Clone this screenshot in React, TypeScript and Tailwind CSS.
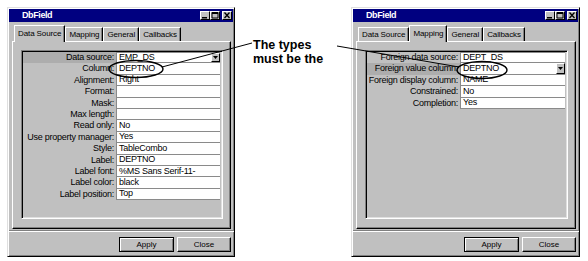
const ui = "font-['Liberation_Sans',Arial,sans-serif]";

type Row = { label: string; value: string; combo?: boolean; hot?: boolean };

const leftRows: Row[] = [
  { label: "Data source:", value: "EMP_DS", combo: true, hot: true },
  { label: "Column:", value: "DEPTNO" },
  { label: "Alignment:", value: "Right" },
  { label: "Format:", value: "" },
  { label: "Mask:", value: "" },
  { label: "Max length:", value: "" },
  { label: "Read only:", value: "No" },
  { label: "Use property manager:", value: "Yes" },
  { label: "Style:", value: "TableCombo" },
  { label: "Label:", value: "DEPTNO" },
  { label: "Label font:", value: "%MS Sans Serif-11-" },
  { label: "Label color:", value: "black" },
  { label: "Label position:", value: "Top" },
];

const rightRows: Row[] = [
  { label: "Foreign data source:", value: "DEPT_DS" },
  { label: "Foreign value column:", value: "DEPTNO", combo: true, hot: true },
  { label: "Foreign display column:", value: "NAME" },
  { label: "Constrained:", value: "No" },
  { label: "Completion:", value: "Yes" },
];

const tabNames = ["Data Source", "Mapping", "General", "Callbacks"];

function TitleButton({ kind }: { kind: "min" | "max" | "close" }) {
  return (
    <div className="w-[10px] h-[9px] bg-[#c0c0c0] border-t border-l border-white border-r border-b border-r-black border-b-black flex items-center justify-center">
      <svg width="8" height="7" viewBox="0 0 8 7">
        {kind === "min" && <rect x="1" y="5" width="5" height="1.5" fill="#000" />}
        {kind === "max" && (
          <path d="M1 0.5h6v5.5h-6z M1 1.5h6" fill="none" stroke="#000" strokeWidth="1" />
        )}
        {kind === "close" && <path d="M1.5 0.5l5 5.5M6.5 0.5l-5 5.5" stroke="#000" strokeWidth="1.3" />}
      </svg>
    </div>
  );
}

function PropRow({ row, first }: { row: Row; first: boolean }) {
  return (
    <div className="flex h-[11.4px] leading-[11px]">
      <div
        className={
          "w-[93px] shrink-0 text-right pr-[2px] whitespace-nowrap text-[#000] " +
          (row.hot ? "bg-[#adadad]" : "")
        }
      >
        {row.label}
      </div>
      <div
        className={
          "flex-1 mr-[1px] bg-white border-l border-b border-[#8a8a8a] flex items-center pl-[2px] whitespace-nowrap " +
          (first ? "border-t" : "")
        }
      >
        <span className="flex-1">{row.value}</span>
        {row.combo && (
          <div className="w-[9px] h-full bg-[#c0c0c0] border-t border-l border-white border-r border-b border-r-black border-b-black flex items-center justify-center">
            <svg width="5" height="3" viewBox="0 0 5 3">
              <path d="M0 0h5L2.5 3z" fill="#000" />
            </svg>
          </div>
        )}
      </div>
    </div>
  );
}

function Dialog({ active, rows, width }: { active: number; rows: Row[]; width: string }) {
  return (
    <div
      className={
        width +
        " h-[250px] shrink-0 bg-[#c0c0c0] border border-t-[#dfdfdf] border-l-[#dfdfdf] border-r-black border-b-black shadow-[inset_1px_1px_0_#fff,inset_-1px_-1px_0_#808080] p-[1px] flex flex-col " +
        ui
      }
    >
      <div className="h-[13px] bg-[#000080] flex items-center pl-[13px] pr-[1px]">
        <span className="flex-1 text-white font-bold text-[9px] tracking-[-0.4px] leading-none">DbField</span>
        <TitleButton kind="min" />
        <TitleButton kind="max" />
        <div className="w-[2px]" />
        <TitleButton kind="close" />
      </div>

      <div className="flex-1 flex flex-col pl-[3px] pr-[2px]">
        <div className="h-[19px] flex items-end pl-[2px] text-[8px] tracking-[-0.1px]">
          {tabNames.map((t, i) =>
            i === active ? (
              <div
                key={t}
                className="relative z-10 -mb-px h-[17px] px-[3px] bg-[#c0c0c0] border-t border-l border-white border-r border-r-black shadow-[inset_-1px_0_0_#808080] flex items-center"
              >
                {t}
              </div>
            ) : (
              <div
                key={t}
                className="h-[14px] px-[3px] border-t border-l border-white border-r border-r-black shadow-[inset_-1px_0_0_#808080] flex items-center"
              >
                {t}
              </div>
            )
          )}
        </div>

        <div className="h-[188px] border-t border-l border-white border-r border-b border-r-black border-b-black shadow-[inset_-1px_-1px_0_#808080] pl-[8px] pr-[7px] pt-[8px] pb-[9px] flex">
          <div className="flex-1 border-t border-l border-[#808080] border-r border-b border-r-white border-b-white shadow-[inset_1px_1px_0_#000,inset_-1px_-1px_0_#dfdfdf] p-[1px] text-[9px] tracking-[-0.25px]">
            {rows.map((r, i) => (
              <PropRow key={r.label} row={r} first={i === 0} />
            ))}
          </div>
        </div>

        <div className="mt-[1px] h-[2px] border-t border-[#808080] border-b border-b-white -mx-[3px]" />

        <div className="mt-[5px] h-[15px] flex justify-end gap-[3px] text-[8px]">
          <button className="w-[55px] h-[15px] bg-[#c0c0c0] border border-black shadow-[inset_1px_1px_0_#fff,inset_-1px_-1px_0_#808080] flex items-center justify-center">
            Apply
          </button>
          <button className="w-[54px] h-[15px] bg-[#c0c0c0] border-t border-l border-white border-r border-b border-r-black border-b-black shadow-[inset_-1px_-1px_0_#808080] flex items-center justify-center">
            Close
          </button>
        </div>
      </div>
    </div>
  );
}

export default function App() {
  return (
    <div className="relative w-[588px] h-[261px] bg-white overflow-hidden">
      <div className="flex pt-[7px] pl-[7px]">
        <Dialog active={0} rows={leftRows} width="w-[228px]" />
        <div className="w-[116px] pl-[18px] pt-[31px] font-['Liberation_Sans',Arial,sans-serif] font-bold text-[12.5px] leading-[14px] text-black">
          The types
          <br />
          must be the
        </div>
        <Dialog active={1} rows={rightRows} width="w-[229px]" />
      </div>

      <svg className="absolute inset-0 pointer-events-none" width="588" height="261" viewBox="0 0 588 261">
        <ellipse cx="136" cy="69" rx="27" ry="8.5" fill="none" stroke="#000" strokeWidth="1.4" />
        <line x1="162" y1="67" x2="252" y2="43" stroke="#000" strokeWidth="1" />
        <ellipse cx="482" cy="70" rx="25" ry="8.5" fill="none" stroke="#000" strokeWidth="1.4" />
        <line x1="337" y1="46" x2="459" y2="67" stroke="#000" strokeWidth="1" />
      </svg>
    </div>
  );
}
